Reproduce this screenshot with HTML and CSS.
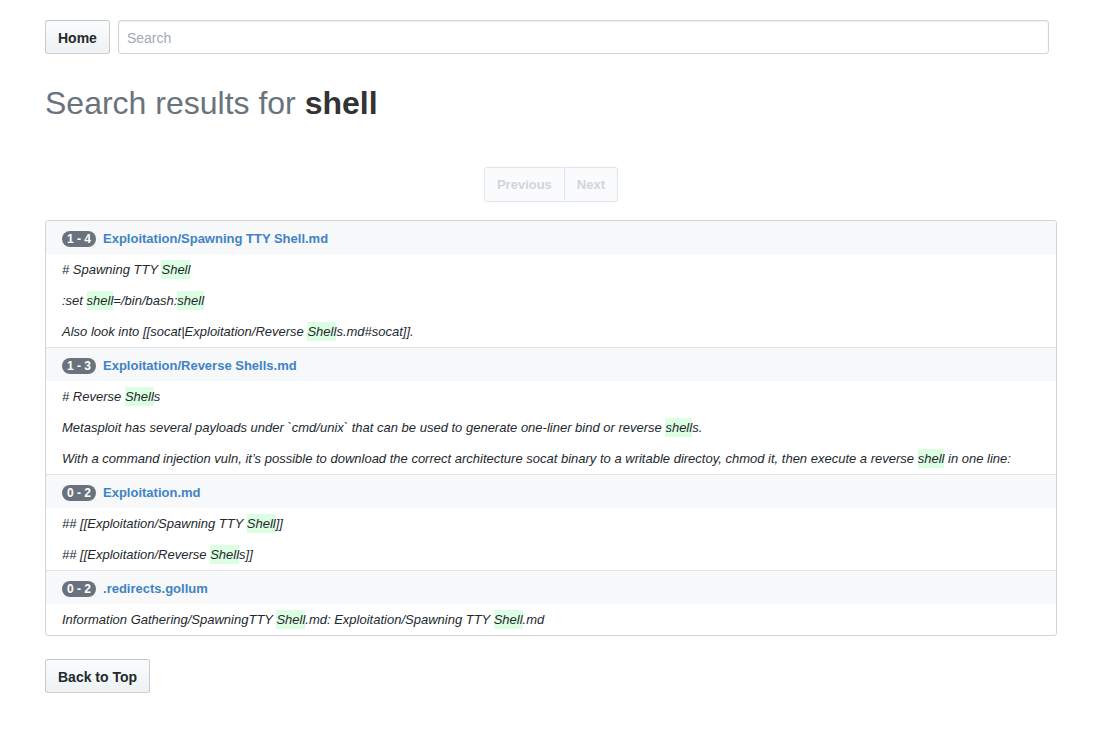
FILE: index.html
```html
<!DOCTYPE html>
<html lang="en">
<head>
<meta charset="utf-8">
<title>Search results for shell</title>
<link rel="stylesheet" href="styles.css">
</head>
<body>
<div class="container">
  <div class="toolbar">
    <a class="btn" href="#">Home</a>
    <input class="search" type="text" placeholder="Search">
  </div>
  <h1 class="title">Search results for <strong>shell</strong></h1>
  <nav class="pagination">
    <span class="page disabled">Previous</span>
    <span class="page disabled">Next</span>
  </nav>
  <div class="box">
    <div class="row-head"><span class="counter">1 - 4</span><a class="file-link" href="#">Exploitation/Spawning TTY Shell.md</a></div>
    <ul class="context">
      <li># Spawning TTY <mark>Shell</mark></li>
      <li>:set <mark>shell</mark>=/bin/bash:<mark>shell</mark></li>
      <li>Also look into [[socat|Exploitation/Reverse <mark>Shell</mark>s.md#socat]].</li>
    </ul>
    <div class="row-head"><span class="counter">1 - 3</span><a class="file-link" href="#">Exploitation/Reverse Shells.md</a></div>
    <ul class="context">
      <li># Reverse <mark>Shell</mark>s</li>
      <li>Metasploit has several payloads under `cmd/unix` that can be used to generate one-liner bind or reverse <mark>shell</mark>s.</li>
      <li>With a command injection vuln, it’s possible to download the correct architecture socat binary to a writable directoy, chmod it, then execute a reverse <mark>shell</mark> in one line:</li>
    </ul>
    <div class="row-head"><span class="counter">0 - 2</span><a class="file-link" href="#">Exploitation.md</a></div>
    <ul class="context">
      <li>## [[Exploitation/Spawning TTY <mark>Shell</mark>]]</li>
      <li>## [[Exploitation/Reverse <mark>Shell</mark>s]]</li>
    </ul>
    <div class="row-head"><span class="counter">0 - 2</span><a class="file-link" href="#">.redirects.gollum</a></div>
    <ul class="context">
      <li>Information Gathering/SpawningTTY <mark>Shell</mark>.md: Exploitation/Spawning TTY <mark>Shell</mark>.md</li>
    </ul>
  </div>
  <a class="btn btn-top" href="#">Back to Top</a>
</div>
</body>
</html>
```
FILE: styles.css
```css
* { box-sizing: border-box; }
html, body { margin: 0; padding: 0; background: #fff; }
body {
  font-family: "Liberation Sans", Arial, sans-serif;
  font-size: 14px;
  color: #24292e;
}
.container {
  padding: 20px 49px 0 45px;
}
.toolbar {
  display: flex;
  gap: 8px;
  padding-right: 8px;
}
.btn {
  display: inline-block;
  height: 34px;
  padding: 1px 12px 0;
  line-height: 32px;
  font-size: 14px;
  font-weight: bold;
  color: #24292e;
  text-decoration: none;
  background: linear-gradient(#fafbfc, #eff3f6 90%);
  border: 1px solid rgba(27,31,35,0.2);
  border-radius: 3px;
}
.search {
  flex: 1;
  height: 34px;
  padding: 2px 8px 0;
  font-family: inherit;
  font-size: 14px;
  color: #24292e;
  border: 1px solid #d1d5da;
  border-radius: 3px;
  box-shadow: inset 0 1px 2px rgba(27,31,35,0.075);
  outline: none;
}
.search::placeholder { color: #a3aab1; }
.title {
  margin: 31px 0 0;
  font-size: 32px;
  font-weight: 300;
  line-height: 36px;
  color: #6a737d;
}
.title strong { color: #333; font-weight: bold; }
.pagination {
  display: flex;
  justify-content: center;
  margin: 46px 0 18px;
}
.page {
  display: inline-block;
  height: 35px;
  line-height: 33px;
  padding: 0 12px;
  font-size: 13px;
  font-weight: bold;
  color: #d1d5da;
  background: #fafbfc;
  border: 1px solid #e1e4e8;
}
.page:first-child { border-radius: 3px 0 0 3px; }
.page + .page { border-left: 0; border-radius: 0 3px 3px 0; }
.box {
  border: 1px solid #d1d5da;
  border-radius: 3px;
  overflow: hidden;
}
.row-head {
  display: flex;
  align-items: center;
  height: 34px;
  padding: 2px 16px 0;
  background: #f6f8fa;
  border-top: 1px solid #e1e4e8;
}
.row-head:first-child { border-top: 0; height: 33px; }
.counter {
  display: inline-block;
  padding: 0 5px;
  height: 16px;
  line-height: 16px;
  font-size: 12px;
  font-weight: bold;
  color: #fff;
  background: #6a737d;
  border-radius: 20px;
  margin-right: 7px;
}
.file-link {
  font-size: 13px;
  font-weight: bold;
  color: #4183c4;
  text-decoration: none;
}
.context {
  list-style: none;
  margin: 0;
  padding: 0 16px;
}
.context li {
  height: 31px;
  padding-top: 1px;
  font-size: 13px;
  font-style: italic;
  line-height: 30px;
  color: #24292e;
}
mark {
  background: #dcffe4;
  color: inherit;
  padding: 2px 0;
}
.btn-top {
  margin-top: 23px;
}
```
